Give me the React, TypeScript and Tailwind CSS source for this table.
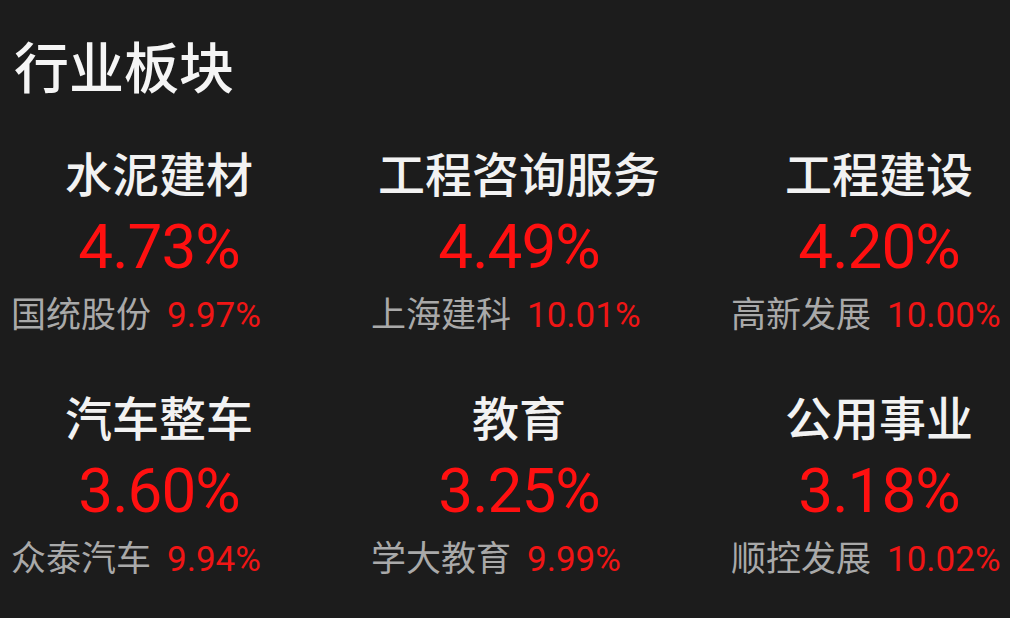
import React from "react";

type Sector = {
  name: string;
  change: string;
  leader: string;
  leaderChange: string;
};

const sectors: Sector[] = [
  { name: "水泥建材", change: "4.73%", leader: "国统股份", leaderChange: "9.97%" },
  { name: "工程咨询服务", change: "4.49%", leader: "上海建科", leaderChange: "10.01%" },
  { name: "工程建设", change: "4.20%", leader: "高新发展", leaderChange: "10.00%" },
  { name: "汽车整车", change: "3.60%", leader: "众泰汽车", leaderChange: "9.94%" },
  { name: "教育", change: "3.25%", leader: "学大教育", leaderChange: "9.99%" },
  { name: "公用事业", change: "3.18%", leader: "顺控发展", leaderChange: "10.02%" },
];

const cjk = "font-['Noto_Sans_CJK_SC','Noto_Sans',sans-serif]";
const num = "font-['Roboto','Noto_Sans',sans-serif]";

function SectorCell({ sector }: { sector: Sector }) {
  return (
    <div className="flex flex-col pl-[11px] h-[244px]">
      <div className="w-[296px] flex flex-col items-center">
        <div className={`${cjk} text-[47px] leading-[56px] font-medium text-[#f2f2f2] whitespace-nowrap`}>
          {sector.name}
        </div>
        <div className={`${num} text-[62px] leading-[70px] tracking-[-1px] text-[#ff1010] mt-[12px]`}>
          {sector.change}
        </div>
      </div>
      <div className="flex items-baseline mt-[8px] whitespace-nowrap">
        <span className={`${cjk} text-[35px] leading-[44px] text-[#a9a9a9]`}>{sector.leader}</span>
        <span className={`${num} text-[35px] leading-[44px] text-[#f01515] ml-[16px]`}>{sector.leaderChange}</span>
      </div>
    </div>
  );
}

export default function App() {
  return (
    <div className="w-[1010px] h-[618px] bg-[#1c1c1c] overflow-hidden">
      <h1 className={`${cjk} text-[55px] leading-[64px] font-medium text-[#f5f5f5] pl-[14px] pt-[32px]`}>
        行业板块
      </h1>
      <div className="grid grid-cols-[repeat(3,360px)] mt-[48px]">
        {sectors.map((s) => (
          <SectorCell key={s.name} sector={s} />
        ))}
      </div>
    </div>
  );
}
